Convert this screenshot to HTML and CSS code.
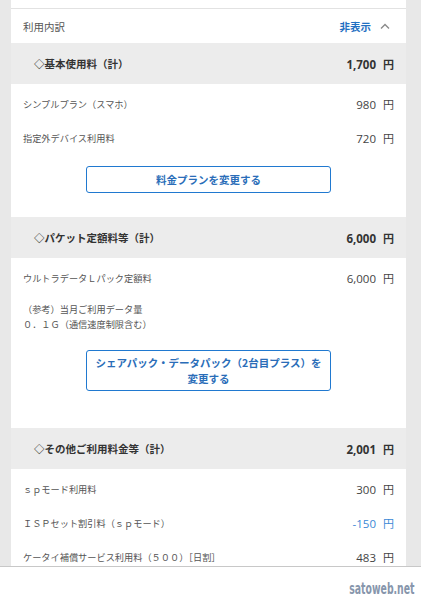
FILE: index.html
```html
<!DOCTYPE html>
<html>
<head>
    <title>利用内訳</title>
    <meta name="viewport" content="width=device-width, initial-scale=1.0">
    <meta charset="utf-8">
    <link rel="stylesheet" href="styles.css">
</head>

<body>
    <div class="page">
        <div class="top-strip"></div>

        <div class="summary">
            <span class="summary-title">利用内訳</span>
            <span class="toggle">非表示
                <svg class="chevron" width="10" height="6" viewBox="0 0 10 6"><polyline points="1,5.5 5,1.5 9,5.5" fill="none" stroke="#8a8a8a" stroke-width="1.4"/></svg>
            </span>
        </div>

        <div class="section-head">
            <span>◇基本使用料（計）</span>
            <span class="amount">1,700<span class="yen">円</span></span>
        </div>
        <div class="rows">
            <div class="row"><span class="label">シンプルプラン（スマホ）</span><span class="amount">980<span class="yen">円</span></span></div>
            <div class="row"><span class="label">指定外デバイス利用料</span><span class="amount">720<span class="yen">円</span></span></div>
        </div>
        <div class="btn-wrap first">
            <a class="btn">料金プランを変更する</a>
        </div>

        <div class="section-head">
            <span>◇パケット定額料等（計）</span>
            <span class="amount">6,000<span class="yen">円</span></span>
        </div>
        <div class="rows">
            <div class="row"><span class="label">ウルトラデータＬパック定額料</span><span class="amount">6,000<span class="yen">円</span></span></div>
        </div>
        <div class="note">
            （参考）当月ご利用データ量<br>
            ０．１Ｇ（通信速度制限含む）
        </div>
        <div class="btn-wrap second">
            <a class="btn tall">シェアパック・データパック（2台目プラス）を<br>変更する</a>
        </div>

        <div class="section-head">
            <span>◇その他ご利用料金等（計）</span>
            <span class="amount">2,001<span class="yen">円</span></span>
        </div>
        <div class="rows">
            <div class="row"><span class="label">ｓｐモード利用料</span><span class="amount">300<span class="yen">円</span></span></div>
            <div class="row"><span class="label">ＩＳＰセット割引料（ｓｐモード）</span><span class="amount minus">-150<span class="yen">円</span></span></div>
            <div class="row"><span class="label">ケータイ補償サービス利用料（５００）［日割］</span><span class="amount">483<span class="yen">円</span></span></div>
        </div>
    </div>

    <div class="footer">
        <span class="site">satoweb.net</span>
    </div>
</body>
</html>
```

FILE: styles.css
```css
*{
    box-sizing: border-box;
}

body{
    margin: 0;
    background: #e8e8e8;
    font-family: "Noto Sans CJK JP", "Noto Sans", sans-serif;
    color: #555;
    height: 600px;
    overflow: hidden;
}

.page{
    margin-left: 11px;
    width: 395px;
    background: #fff;
}

.top-strip{
    height: 9px;
    border-bottom: 1px solid #e2e2e2;
}

.summary{
    display: flex;
    justify-content: space-between;
    align-items: center;
    height: 34px;
    padding: 0 16px 0 12px;
}

.summary-title{
    font-size: 10.5px;
    color: #555;
}

.toggle{
    display: flex;
    align-items: center;
    gap: 9px;
    font-size: 10.5px;
    font-weight: bold;
    color: #1f6fc2;
}

.section-head{
    display: flex;
    justify-content: space-between;
    align-items: center;
    height: 41px;
    padding: 0 12px 0 23px;
    background: #ececec;
    font-size: 10.5px;
    font-weight: bold;
    color: #333;
}

.section-head .amount{
    color: #333;
}

.rows{
    padding-top: 3px;
}

.row{
    display: flex;
    justify-content: space-between;
    align-items: center;
    height: 34px;
    padding: 0 12px;
}

.label{
    font-size: 9.2px;
    color: #555;
}

.amount{
    font-family: "Open Sans", "Noto Sans", sans-serif;
    font-size: 11.5px;
    color: #444;
    white-space: nowrap;
}

.amount .yen{
    font-family: "Noto Sans CJK JP", sans-serif;
    font-size: 11px;
    margin-left: 7px;
}

.amount.minus{
    color: #3b88d6;
}

.note{
    padding: 7px 12px 0;
    font-size: 9.2px;
    line-height: 15px;
    color: #555;
}

.btn-wrap{
    display: flex;
    justify-content: center;
}

.btn-wrap.first{
    padding-top: 11px;
    padding-bottom: 24px;
}

.btn-wrap.second{
    padding-top: 18px;
    padding-bottom: 37px;
}

.btn{
    display: flex;
    justify-content: center;
    align-items: center;
    width: 245px;
    height: 27px;
    border: 1.5px solid #2079d0;
    border-radius: 3px;
    font-size: 10.5px;
    font-weight: bold;
    color: #2a6db8;
    text-align: center;
}

.btn.tall{
    height: 41px;
    line-height: 16px;
}

.footer{
    position: fixed;
    left: 0;
    bottom: 0;
    width: 100%;
    height: 34px;
    background: #fff;
    border-top: 1px solid #c8c8c8;
    display: flex;
    justify-content: flex-end;
    align-items: center;
    padding: 10px 7px 0 0;
}

.site{
    font-family: "DejaVu Sans Condensed", sans-serif;
    font-weight: bold;
    font-size: 15px;
    color: #8796ac;
    transform: scaleX(0.69);
    transform-origin: right center;
}
```
